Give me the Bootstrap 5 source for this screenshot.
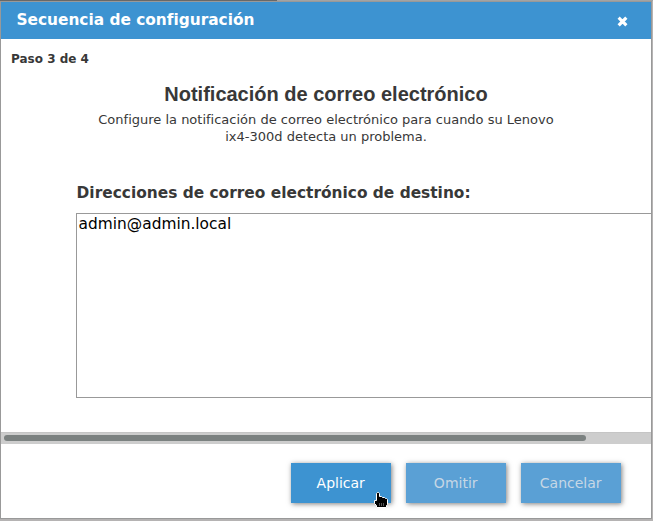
<!DOCTYPE html>
<html lang="es">
<head>
<meta charset="utf-8">
<meta name="viewport" content="width=device-width, initial-scale=1">
<title>Secuencia de configuración</title>
<link href="https://cdn.jsdelivr.net/npm/bootstrap@5.3.0/dist/css/bootstrap.min.css" rel="stylesheet">
<style>
body{width:653px;height:521px;background:linear-gradient(90deg,#686868 277px,#a3a3a3 277px) 0 0/100% 1px no-repeat,#b5b3b3;font-family:"DejaVu Sans",sans-serif;color:#383838;padding-top:1px}
.dialog{width:652px;height:518px;border:1px solid #999;background:#fff}
.titlebar{height:37px;background:#3d93d1;padding:0 23px 1px 15.5px}
.titlebar h1{font-size:15.36px;line-height:20px}
.close-btn{width:11px;height:11px;margin-top:3px}
.step{font-size:12px;line-height:18px;padding:11px 10px 0}
.heading{font-family:"Liberation Sans",sans-serif;font-size:20px;line-height:24px;margin-top:14px}
.description{font-size:13px;line-height:17px;width:470px;margin-top:5px}
.fields{margin:38px 0 0 75px}
.fields label{font-size:15.4px;line-height:20px;padding-left:.6px}
.addresses{display:block;width:700px;height:185px;border:1px solid #999;font:15.4px/18px "DejaVu Sans",sans-serif;color:#000;padding:1px 1.6px;resize:none;margin-top:10px;outline:0}
.track{height:12px;background:#cdcdcd;padding:2px 3px;border-top:1px solid #c5c5c5}
.thumb{width:582px;height:6px;background:#7b8180}
.actions{height:74px;padding:19px 30px 0;gap:15px}
.actions .btn{width:100px;height:40px;background:#3d93d1;color:#fff;font-size:14px;padding:0 .6px 0 0;box-shadow:1px 1px 5px rgba(0,0,0,.5)}
.actions .btn:disabled{background:#5aa0d5;color:#c6d7e5;opacity:1}
.pointer{left:82px;top:29px;width:16px;height:18px}
</style>
</head>
<body class="overflow-hidden">
<main class="dialog d-flex flex-column overflow-hidden">
  <header class="titlebar d-flex align-items-center justify-content-between text-white flex-shrink-0">
    <h1 class="fw-bold m-0">Secuencia de configuración</h1>
    <button class="close-btn border-0 bg-transparent p-0 d-flex" aria-label="Cerrar"><svg width="11" height="11" viewBox="0 0 11 11"><path d="M2.8 2.8 8.2 8.2M8.2 2.8 2.8 8.2" stroke="#fff" stroke-width="3.2" stroke-linecap="square"/></svg></button>
  </header>
  <section class="overflow-hidden flex-grow-1">
    <p class="step fw-bold m-0">Paso 3 de 4</p>
    <h2 class="heading fw-bold text-center mb-0">Notificación de correo electrónico</h2>
    <p class="description text-center mx-auto mb-0">Configure la notificación de correo electrónico para cuando su Lenovo ix4-300d detecta un problema.</p>
    <div class="fields">
      <label for="addresses" class="fw-bold d-block">Direcciones de correo electrónico de destino:</label>
      <textarea id="addresses" class="addresses" spellcheck="false">admin@admin.local</textarea>
    </div>
  </section>
  <div class="track flex-shrink-0"><div class="thumb rounded-pill"></div></div>
  <footer class="actions d-flex justify-content-end flex-shrink-0">
    <div class="position-relative">
      <button class="btn border-0 rounded-0">Aplicar</button>
      <svg class="pointer position-absolute" viewBox="0 0 16 18"><path d="M3.500 1.500l1-1h1l1 1v3h2l1 1h2l1 1h1l1 1v5l-1 1v2H3.500v-2l-2-2V8.500h2z" fill="#000" stroke="#fff"/><path d="M6.500 11v3m2-3v3m2-3v3" stroke="#666" stroke-width=".8"/></svg>
    </div>
    <button class="btn border-0 rounded-0" disabled>Omitir</button>
    <button class="btn border-0 rounded-0" disabled>Cancelar</button>
  </footer>
</main>
<script src="https://cdn.jsdelivr.net/npm/bootstrap@5.3.0/dist/js/bootstrap.bundle.min.js"></script>
</body>
</html>
